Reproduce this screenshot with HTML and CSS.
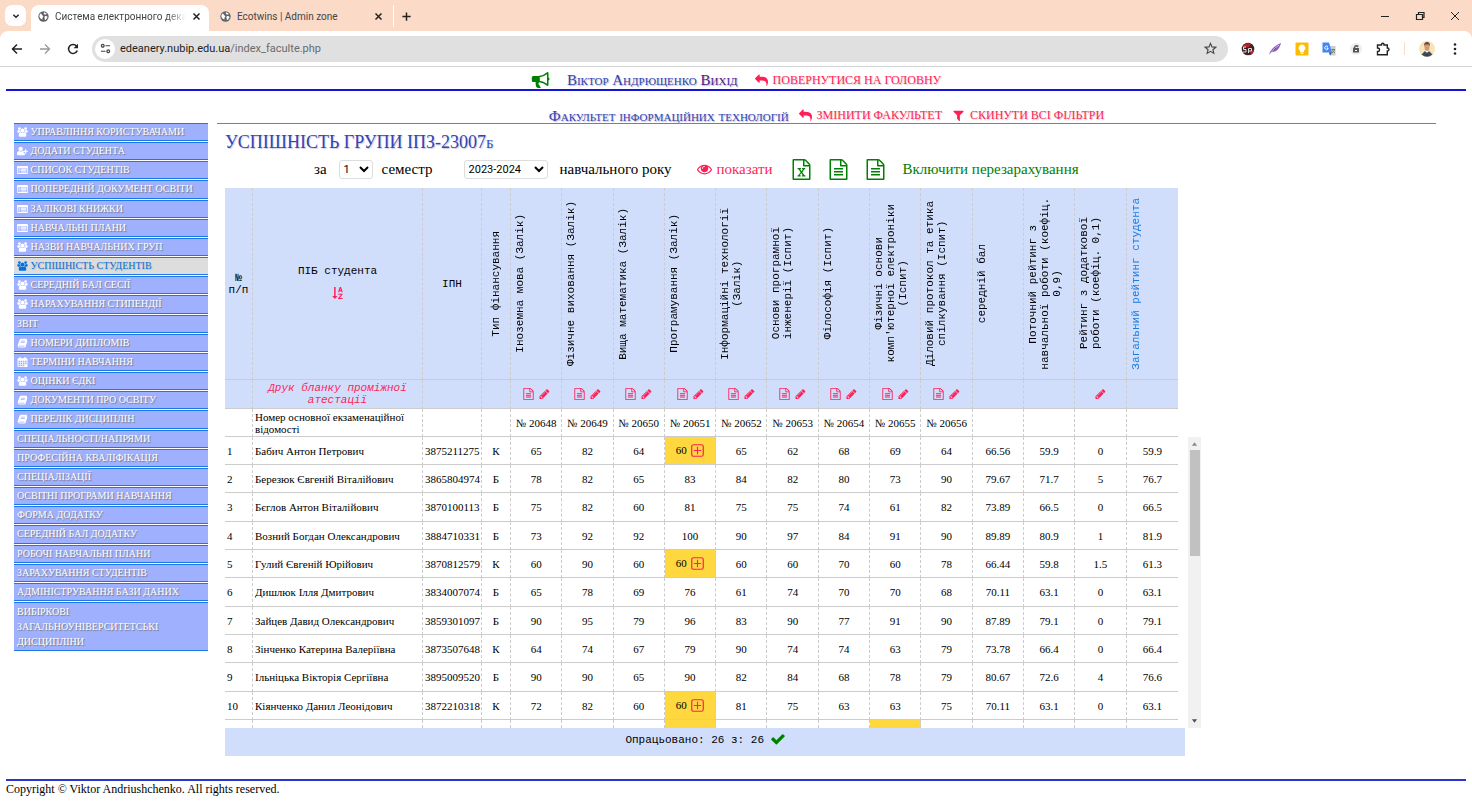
FILE: index.html
```html
<!DOCTYPE html>
<html lang="uk">
<head>
<meta charset="utf-8">
<title>Система електронного деканату</title>
<link rel="stylesheet" href="styles.css">
</head>
<body>
<svg class="sprite" aria-hidden="true">
<symbol id="users" viewBox="0 0 2048 1792"><path d="M657 896q-162 5-265 128h-134q-82 0-138-40.500t-56-118.500q0-353 124-353 6 0 43.500 21t97.500 42.500 119 21.500q67 0 133-23-5 37-5 66 0 159 93 256zm1071 637q0 120-73 189.500t-194 69.500h-874q-121 0-194-69.500t-73-189.500q0-53 3.500-103.500t14-109 26.500-108.500 43-97.500 62-81 85.500-53.500 111.500-20q10 0 43 21.500t73 48 107 48 135 21.500 135-21.500 107-48 73-48 43-21.500q61 0 111.500 20t85.500 53.500 62 81 43 97.500 26.500 108.500 14 109 3.500 103.500zm-1024-1277q0 106-75 181t-181 75-181-75-75-181 75-181 181-75 181 75 75 181zm704 384q0 159-112.500 271.500t-271.500 112.500-271.500-112.500-112.500-271.500 112.500-271.500 271.500-112.500 271.500 112.500 112.500 271.500zm576 225q0 78-56 118.500t-138 40.500h-134q-103-123-265-128 93-97 93-256 0-29-5-66 66 23 133 23 59 0 119-21.500t97.500-42.500 43.500-21q124 0 124 353zm-128-609q0 106-75 181t-181 75-181-75-75-181 75-181 181-75 181 75 75 181z"/></symbol>
<symbol id="user-plus" viewBox="0 0 18 16"><circle cx="6" cy="4.500" r="3.600"/><path d="M0 13c0-3 1-5 3.400-5 1.700 1.300 3.600 1.300 5.200 0 1 0 1.700.4 2.300 1v2.500H13V14c-.5.700-1.200 1-2 1H2c-1.300 0-2-.8-2-2zM13 5h2v2.500h2.500v2H15V12h-2V9.500h-2.500v-2H13z"/></symbol>
<symbol id="list" viewBox="0 0 18 16"><path fill-rule="evenodd" d="M1.500 1.500h15q1.500 0 1.500 1.500v10q0 1.500-1.500 1.500h-15Q0 14.500 0 13V3q0-1.500 1.500-1.500zM1.200 5v8h15.600V5zM2.500 6h2v1.500h-2zm3.500 0h9.500v1.500H6zM2.500 8.500h2V10h-2zm3.500 0h9.500V10H6zM2.500 11h2v1.200h-2zm3.500 0h9.500v1.200H6z"/></symbol>
<symbol id="book" viewBox="0 0 16 16"><path fill-rule="evenodd" d="M5.500 1H14q1.500 0 1.200 1.500L15 3.500q1 .5.700 1.500l-2.500 8.500Q12.800 15 11.500 15H3Q.5 15 .3 12.500v-1.500L3.500 2.500Q4 1 5.500 1zM6 4.200 5.700 5.400H12l.4-1.200zM5.300 6.800 5 8h6.300l.3-1.200zM2 12.200q-.3 1.400 1 1.400h8l.5-1.400z"/></symbol>
<symbol id="calendar" viewBox="0 0 16 16"><path fill-rule="evenodd" d="M3 0h2v2h6V0h2v2h1.500Q16 2 16 3.500v11q0 1.500-1.500 1.500h-13Q0 16 0 14.500v-11Q0 2 1.500 2H3zM1.500 6v2.200H4V6zM5 6v2.200h2.500V6zM8.500 6v2.200H11V6zM12 6v2.200h2.500V6zM1.500 9.200v2.200H4V9.200zM5 9.200v2.200h2.500V9.200zM8.500 9.200v2.200H11V9.200zM12 9.200v2.200h2.500V9.200zM1.500 12.400v2.200H4v-2.200zM5 12.400v2.200h2.500v-2.200zM8.500 12.400v2.200H11v-2.200z"/></symbol>
<symbol id="horn" viewBox="0 0 18 16"><path fill-rule="evenodd" d="M16 0q1 0 1 1v4.500q1 .3 1 1.500t-1 1.500V13q0 1-1 1-4-3.400-8-3.800-1.200.5-1 1.700.1.900 1 1.600.2 1.200 1.500 1.800-.8.900-2.300.7-1.700 0-2.400-1-1-2.800-.6-5H1.800Q.3 10 .3 8.500v-3Q.3 4 1.800 4H7q5-.4 9-4zm-.5 2.200Q12 4.800 8.300 5.200v3.600q3.700.5 7.200 3z"/></symbol>
<symbol id="reply" viewBox="0 0 1792 1792"><path transform="matrix(-1 0 0 1 1792 0)" d="M1792 640q0 26-19 45l-512 512q-19 19-45 19t-45-19-19-45v-256h-224q-98 0-175.500 6t-154 21.500-133 42.500-105.500 69.500-80 101-48.500 138.500-17.500 181q0 55 5 123 0 6 2.500 23.500t2.500 26.500q0 15-8.500 25t-23.500 10q-16 0-28-17-7-9-13-22t-13.500-30-10.500-24q-127-285-127-451 0-199 53-333 162-403 875-403h224v-256q0-26 19-45t45-19 45 19l512 512q19 19 19 45z"/></symbol>
<symbol id="filter" viewBox="0 0 1792 1792"><path d="M1595 295q17 41-14 70l-493 493v742q0 42-39 59-13 5-25 5-27 0-45-19l-256-256q-19-19-19-45v-486l-493-493q-31-29-14-70 17-39 59-39h1280q42 0 59 39z"/></symbol>
<symbol id="eye" viewBox="0 200 1792 1500"><path d="M1664 960q-152-236-381-353 61 104 61 225 0 185-131.500 316.500t-316.500 131.500-316.500-131.500-131.500-316.500q0-121 61-225-229 117-381 353 133 205 333.500 326.500t434.500 121.500 434.500-121.500 333.500-326.500zm-720-384q0-20-14-34t-34-14q-125 0-214.500 89.500t-89.500 214.500q0 20 14 34t34 14 34-14 14-34q0-86 61-147t147-61q20 0 34-14t14-34zm848 384q0 34-20 69-140 230-376.500 368.500t-499.500 138.500-499.500-139-376.500-368q-20-35-20-69t20-69q140-229 376.500-368t499.500-139 499.500 139 376.500 368q20 35 20 69z"/></symbol>
<symbol id="pencil" viewBox="128 128 1536 1536"><path d="M491 1536l91-91-235-235-91 91v107h128v128h107zm523-928q0-22-22-22-10 0-17 7l-542 542q-7 7-7 17 0 22 22 22 10 0 17-7l542-542q7-7 7-17zm-54-192l416 416-832 832h-416v-416zm683 96q0 53-37 90l-166 166-416-416 166-165q36-38 90-38 53 0 91 38l235 234q37 39 37 91z"/></symbol>
<symbol id="doc" viewBox="128 0 1536 1792"><path d="M1596 380q28 28 48 76t20 88v1152q0 40-28 68t-68 28h-1344q-40 0-68-28t-28-68v-1600q0-40 28-68t68-28h896q40 0 88 20t76 48zm-444-244v376h376q-10-29-22-41l-313-313q-12-12-41-22zm384 1528v-1024h-416q-40 0-68-28t-28-68v-416h-768v1536h1280zm-1024-864q0-14 9-23t23-9h704q14 0 23 9t9 23v64q0 14-9 23t-23 9h-704q-14 0-23-9t-9-23v-64zm736 224q14 0 23 9t9 23v64q0 14-9 23t-23 9h-704q-14 0-23-9t-9-23v-64q0-14 9-23t23-9h704zm0 256q14 0 23 9t9 23v64q0 14-9 23t-23 9h-704q-14 0-23-9t-9-23v-64q0-14 9-23t23-9h704z"/></symbol>
<symbol id="xls" viewBox="128 0 1536 1792"><path d="M1596 380q28 28 48 76t20 88v1152q0 40-28 68t-68 28h-1344q-40 0-68-28t-28-68v-1600q0-40 28-68t68-28h896q40 0 88 20t76 48zm-444-244v376h376q-10-29-22-41l-313-313q-12-12-41-22zm384 1528v-1024h-416q-40 0-68-28t-28-68v-416h-768v1536h1280z"/><path d="M560 760h290v110h-75l122 180 122-180h-75v-110h270v110h-70l-180 250 190 270h70v110h-290v-110h75l-130-190-130 190h75v110H560v-110h70l190-270-180-250h-80z"/></symbol>
<symbol id="sort" viewBox="0 0 14 16"><path d="M2.500 0h2v12H7l-3.500 4L0 12h2.500zM10 0h1.700L14 7h-1.500L12 5.500H9.700L9.200 7H7.700zm.8 2-.7 2.300h1.500zM8 9h5.700v1l-3.800 4.700h3.900V16H7.800v-1l3.800-4.700H8z"/></symbol>
<symbol id="plus" viewBox="0 0 14 14"><rect x=".8" y=".8" width="12.400" height="12.400" rx="2" fill="none" stroke="currentColor" stroke-width="1.300"/><path d="M6.400 3h1.200v3.400H11v1.200H7.600V11H6.400V7.600H3V6.400h3.400z"/></symbol>
<symbol id="check" viewBox="100 230 1600 1320"><path d="M1671 566q0 40-28 68l-724 724-136 136q-28 28-68 28t-68-28l-136-136-362-362q-28-28-28-68t28-68l136-136q28-28 68-28t68 28l294 295 656-657q28-28 68-28t68 28l136 136q28 28 28 68z"/></symbol>
<symbol id="globe" viewBox="0 0 16 16"><circle cx="8" cy="8" r="7.500"/><path fill="#fff" d="M3 4c2-.5 3 .5 2.600 2C7 6 8 7 7.500 8.500 7 9.500 6 10 6.500 12.500 4 12 1.800 10 2 7zM8.500 2.200c2 0 3.500 1 4.500 2.500-1.500-.4-2 .6-3 .3C8.700 4.600 8 3.600 8.500 2.200zM9.500 8c1.300-1 3-.8 4.300.5-.3 2.500-2 4.300-4 5 .8-1.500-.8-3.600-.3-5.500z"/></symbol>
<symbol id="close" viewBox="0 0 12 12"><path fill="none" stroke="currentColor" stroke-width="2" d="M2 2l8 8M10 2l-8 8"/></symbol>
</svg>

<header class="browser">
  <div class="tabs">
    <button class="tab-search" aria-label="Пошук вкладок"><svg viewBox="0 0 12 12"><path fill="none" stroke="currentColor" stroke-width="2" d="M2 4l4 4 4-4"/></svg></button>
    <div class="tab active"><svg class="fav"><use href="#globe"/></svg><span class="tab-title fade">Система електронного декана</span><button aria-label="Закрити"><svg><use href="#close"/></svg></button></div>
    <div class="tab"><svg class="fav"><use href="#globe"/></svg><span class="tab-title">Ecotwins | Admin zone</span><button aria-label="Закрити"><svg><use href="#close"/></svg></button></div>
    <button class="new-tab" aria-label="Нова вкладка"><svg viewBox="0 0 12 12"><path d="M5.200 1.500h1.600v3.700h3.700v1.600H6.800v3.700H5.200V6.800H1.500V5.200h3.700z"/></svg></button>
    <div class="window-buttons">
      <button aria-label="Згорнути"><svg viewBox="0 0 10 10"><path d="M1 5h8v1H1z"/></svg></button>
      <button aria-label="Розгорнути"><svg viewBox="0 0 10 10"><path fill="none" stroke="currentColor" stroke-width="1.200" d="M1.500 3.500h6v5h-6zM3.500 3V1.500h5.500v5H8"/></svg></button>
      <button aria-label="Закрити вікно"><svg viewBox="0 0 10 10"><path fill="none" stroke="currentColor" d="M1 1l8 8M9 1L1 9"/></svg></button>
    </div>
  </div>
  <div class="toolbar">
    <button aria-label="Назад"><svg viewBox="0 0 12 12"><path fill="none" stroke="currentColor" stroke-width="1.500" d="M11 6H2M6 1.500L1.500 6 6 10.500"/></svg></button>
    <button class="dim" aria-label="Вперед"><svg viewBox="0 0 12 12"><path fill="none" stroke="currentColor" stroke-width="1.300" d="M1 6h9M6 1.500L10.500 6 6 10.500"/></svg></button>
    <button aria-label="Оновити"><svg viewBox="0 0 12 12"><path fill="none" stroke="currentColor" stroke-width="1.500" d="M10.300 7.500A4.500 4.500 0 1 1 9.500 3"/><path d="M11 .8v4.400H6.600z"/></svg></button>
    <div class="address">
      <span class="site"><svg viewBox="0 0 12 12"><g fill="none" stroke="currentColor" stroke-width="1.300"><circle cx="3" cy="3" r="1.500"/><path d="M6 3h5M1 9h5"/><circle cx="9" cy="9" r="1.500"/></g></svg></span>
      <span class="url">edeanery.nubip.edu.ua<span>/index_faculte.php</span></span>
      <button aria-label="Закладка"><svg viewBox="0 0 14 14"><path fill="none" stroke="currentColor" stroke-width="1.200" d="M7 1.500l1.600 3.800 4.100.3-3.100 2.700 1 4L7 10.100l-3.600 2.200 1-4L1.300 5.600l4.100-.3z"/></svg></button>
    </div>
    <div class="extensions">
      <svg viewBox="0 0 14 14"><circle cx="7" cy="7" r="6.300" fill="#3a2426"/><path fill="#b8232b" d="M2 3.500Q6 0 10 2L8 5 3 6zM9 9l4-1q0 3-3 5z"/><path fill="none" stroke="#ddd" d="M5 5H2.500v2.500H5V10H2M7.500 11V6.500h3V9H8"/></svg>
      <svg viewBox="0 0 14 14"><path fill="#8e5bc0" d="M1 13Q3 5 13 1q-1 5-5 8-3 1-5 1.500z"/><path stroke="#fff" stroke-width=".7" d="M3 11q3-5 8-8"/></svg>
      <svg viewBox="0 0 14 14"><rect x=".5" y=".5" width="13" height="13" rx="1" fill="#fbbc04"/><path fill="#fff" d="M7 2.500a3.500 3.500 0 0 1 2 6.300V10H5V8.800a3.500 3.500 0 0 1 2-6.300zM5.500 10.500h3v1.200h-3z"/></svg>
      <svg viewBox="0 0 14 14"><path fill="#ccc" d="M6 4h7.500v9.500H8z"/><path fill="#4285f4" d="M.5.500H7l3 10H.5z"/><path fill="#174ea6" d="M7 10.500h3L8 13.500z"/><path fill="none" stroke="#fff" d="M6 4.500Q4.500 3.500 3.300 4.500t0 2.500T6 7V6H4.500"/><path stroke="#777" d="M9.500 7.500H13M10 11l2.500-3M10.500 8.500L13 11"/></svg>
      <svg viewBox="0 0 14 14"><circle cx="7" cy="7" r="6" fill="#eee"/><path fill="#555" d="M5 5q0-1.500 2-2l2.500.5L9 5.500 7 4.500 6 6h4v4.500H4V6.500z"/><path fill="#fff" d="M6 8h2v1H6z"/></svg>
      <svg viewBox="0 0 14 14"><path fill="none" stroke="currentColor" stroke-width="1.400" d="M1.500 3H5.500Q5.500 1.300 6.800 1.300T8 3H11.300v3q1.700 0 1.700 1.400T11.300 9v3.700H1.500V9.500q2 0 2-1.800t-2-1.700z"/></svg>
      <i></i>
      <svg class="avatar" viewBox="0 0 16 16"><circle cx="8" cy="8" r="8" fill="#f5e5b7"/><path fill="#3f4a5e" d="M2.500 13.500L6 10l2 2 2-2 3.500 3.500Q8 18 2.500 13.500z"/><path fill="#fff" d="M6.500 10h3L8 13z"/><ellipse cx="8" cy="6" rx="2.500" ry="4" fill="#d49a78"/><path fill="#6b4630" d="M5.200 5.500Q4.500 1 8 1t2.800 4.500L10 3.500H6z"/><path stroke="#26324a" d="M8 11v4"/></svg>
      <svg viewBox="0 0 14 14"><circle cx="7" cy="2.500" r="1.300"/><circle cx="7" cy="7" r="1.300"/><circle cx="7" cy="11.500" r="1.300"/></svg>
    </div>
  </div>
</header>

<div class="page">
  <div class="user-bar">
    <svg class="horn"><use href="#horn"/></svg>
    <span class="who">Віктор Андрющенко <a class="exit" href="#">Вихід</a></span>
    <a class="action" href="#"><svg><use href="#reply"/></svg>ПОВЕРНУТИСЯ НА ГОЛОВНУ</a>
  </div>
  <div class="columns">
    <nav class="menu">
      <a href="#"><svg><use href="#users"/></svg> УПРАВЛІННЯ КОРИСТУВАЧАМИ</a>
      <a href="#"><svg><use href="#user-plus"/></svg> ДОДАТИ СТУДЕНТА</a>
      <a href="#"><svg><use href="#list"/></svg> СПИСОК СТУДЕНТІВ</a>
      <a href="#"><svg><use href="#list"/></svg> ПОПЕРЕДНІЙ ДОКУМЕНТ ОСВІТИ</a>
      <a href="#"><svg><use href="#list"/></svg> ЗАЛІКОВІ КНИЖКИ</a>
      <a href="#"><svg><use href="#list"/></svg> НАВЧАЛЬНІ ПЛАНИ</a>
      <a href="#"><svg><use href="#users"/></svg> НАЗВИ НАВЧАЛЬНИХ ГРУП</a>
      <a href="#" class="current"><svg><use href="#users"/></svg> УСПІШНІСТЬ СТУДЕНТІВ</a>
      <a href="#"><svg><use href="#users"/></svg> СЕРЕДНІЙ БАЛ СЕСІЇ</a>
      <a href="#"><svg><use href="#users"/></svg> НАРАХУВАННЯ СТИПЕНДІЇ</a>
      <a href="#">ЗВІТ</a>
      <a href="#"><svg><use href="#book"/></svg> НОМЕРИ ДИПЛОМІВ</a>
      <a href="#"><svg><use href="#calendar"/></svg> ТЕРМІНИ НАВЧАННЯ</a>
      <a href="#"><svg><use href="#users"/></svg> ОЦІНКИ ЄДКІ</a>
      <a href="#"><svg><use href="#book"/></svg> ДОКУМЕНТИ ПРО ОСВІТУ</a>
      <a href="#"><svg><use href="#book"/></svg> ПЕРЕЛІК ДИСЦИПЛІН</a>
      <a href="#">СПЕЦІАЛЬНОСТІ/НАПРЯМИ</a>
      <a href="#">ПРОФЕСІЙНА КВАЛІФІКАЦІЯ</a>
      <a href="#">СПЕЦІАЛІЗАЦІЇ</a>
      <a href="#">ОСВІТНІ ПРОГРАМИ НАВЧАННЯ</a>
      <a href="#">ФОРМА ДОДАТКУ</a>
      <a href="#">СЕРЕДНІЙ БАЛ ДОДАТКУ</a>
      <a href="#">РОБОЧІ НАВЧАЛЬНІ ПЛАНИ</a>
      <a href="#">ЗАРАХУВАННЯ СТУДЕНТІВ</a>
      <a href="#">АДМІНІСТРУВАННЯ БАЗИ ДАНИХ</a>
      <a href="#">ВИБІРКОВІ ЗАГАЛЬНОУНІВЕРСИТЕТСЬКІ ДИСЦИПЛІНИ</a>
    </nav>
    <main>
      <div class="faculty">
        <span class="who">Факультет інформаційних технологій</span>
        <a class="action" href="#"><svg><use href="#reply"/></svg>ЗМІНИТИ ФАКУЛЬТЕТ</a>
        <a class="action" href="#"><svg><use href="#filter"/></svg>СКИНУТИ ВСІ ФІЛЬТРИ</a>
      </div>
      <div class="report">
        <h1>УСПІШНІСТЬ ГРУПИ ІПЗ-23007б</h1>
        <form class="controls">
          <label for="semester">за</label>
          <select id="semester"><option>1</option><option>2</option></select>
          <span>семестр</span>
          <select id="year" class="year"><option>2023-2024</option></select>
          <label for="year">навчального року</label>
          <a class="show" href="#"><svg><use href="#eye"/></svg>показати</a>
          <span class="exports"><a href="#" aria-label="Excel"><svg><use href="#xls"/></svg></a><a href="#" aria-label="Відомість"><svg><use href="#doc"/></svg></a><a href="#" aria-label="Звіт"><svg><use href="#doc"/></svg></a></span>
          <a class="recount" href="#">Включити перезарахування</a>
        </form>
        <div class="grid">
          <div class="table-box">
          <table>
            <colgroup><col class="c-num"><col class="c-name"><col class="c-ipn"><col class="c-fin"><col span="13"></colgroup>
            <thead>
              <tr class="heads">
                <th>№<br>п/п</th>
                <th>ПІБ студента<a class="sort" href="#" aria-label="Сортувати"><svg><use href="#sort"/></svg></a></th>
                <th>ІПН</th>
                <th><span>Тип фінансування</span></th>
                <th class="v"><span>Іноземна мова (Залік)</span></th>
                <th class="v"><span>Фізичне виховання (Залік)</span></th>
                <th class="v"><span>Вища математика (Залік)</span></th>
                <th class="v"><span>Програмування (Залік)</span></th>
                <th class="v"><span>Інформаційні технології<br>(Залік)</span></th>
                <th class="v"><span>Основи програмної<br>інженерії (Іспит)</span></th>
                <th class="v"><span>Філософія (Іспит)</span></th>
                <th class="v"><span>Фізичні основи<br>комп'ютерної електроніки<br>(Іспит)</span></th>
                <th class="v"><span>Діловий протокол та етика<br>спілкування (Іспит)</span></th>
                <th class="v"><span>середній бал</span></th>
                <th class="v"><span>Поточний рейтинг з<br>навчальної роботи (коефіц.<br>0,9)</span></th>
                <th class="v"><span>Рейтинг з додаткової<br>роботи (коефіц. 0,1)</span></th>
                <th class="v total"><span>Загальний рейтинг студента</span></th>
              </tr>
              <tr class="tools">
                <th></th><th><a href="#" class="print">Друк бланку проміжної атестації</a></th><th></th><th></th>
                <th><svg class="d"><use href="#doc"/></svg><svg><use href="#pencil"/></svg></th>
                <th><svg class="d"><use href="#doc"/></svg><svg><use href="#pencil"/></svg></th>
                <th><svg class="d"><use href="#doc"/></svg><svg><use href="#pencil"/></svg></th>
                <th><svg class="d"><use href="#doc"/></svg><svg><use href="#pencil"/></svg></th>
                <th><svg class="d"><use href="#doc"/></svg><svg><use href="#pencil"/></svg></th>
                <th><svg class="d"><use href="#doc"/></svg><svg><use href="#pencil"/></svg></th>
                <th><svg class="d"><use href="#doc"/></svg><svg><use href="#pencil"/></svg></th>
                <th><svg class="d"><use href="#doc"/></svg><svg><use href="#pencil"/></svg></th>
                <th><svg class="d"><use href="#doc"/></svg><svg><use href="#pencil"/></svg></th>
                <th></th><th></th><th><svg><use href="#pencil"/></svg></th><th></th>
              </tr>
              <tr class="sheets"><td></td><td>Номер основної екзаменаційної відомості</td><td></td><td></td><td>№ 20648</td><td>№ 20649</td><td>№ 20650</td><td>№ 20651</td><td>№ 20652</td><td>№ 20653</td><td>№ 20654</td><td>№ 20655</td><td>№ 20656</td><td></td><td></td><td></td><td></td></tr>
            </thead>
            <tbody>
              <tr><td>1</td><td>Бабич Антон Петрович</td><td>3875211275</td><td>К</td><td>65</td><td>82</td><td>64</td><td class="low">60 <svg><use href="#plus"/></svg></td><td>65</td><td>62</td><td>68</td><td>69</td><td>64</td><td>66.56</td><td>59.9</td><td>0</td><td>59.9</td></tr>
              <tr><td>2</td><td>Березюк Євгеній Віталійович</td><td>3865804974</td><td>Б</td><td>78</td><td>82</td><td>65</td><td>83</td><td>84</td><td>82</td><td>80</td><td>73</td><td>90</td><td>79.67</td><td>71.7</td><td>5</td><td>76.7</td></tr>
              <tr><td>3</td><td>Бєглов Антон Віталійович</td><td>3870100113</td><td>Б</td><td>75</td><td>82</td><td>60</td><td>81</td><td>75</td><td>75</td><td>74</td><td>61</td><td>82</td><td>73.89</td><td>66.5</td><td>0</td><td>66.5</td></tr>
              <tr><td>4</td><td>Возний Богдан Олександрович</td><td>3884710331</td><td>Б</td><td>73</td><td>92</td><td>92</td><td>100</td><td>90</td><td>97</td><td>84</td><td>91</td><td>90</td><td>89.89</td><td>80.9</td><td>1</td><td>81.9</td></tr>
              <tr><td>5</td><td>Гулий Євгеній Юрійович</td><td>3870812579</td><td>К</td><td>60</td><td>90</td><td>60</td><td class="low">60 <svg><use href="#plus"/></svg></td><td>60</td><td>60</td><td>70</td><td>60</td><td>78</td><td>66.44</td><td>59.8</td><td>1.5</td><td>61.3</td></tr>
              <tr><td>6</td><td>Дишлюк Ілля Дмитрович</td><td>3834007074</td><td>Б</td><td>65</td><td>78</td><td>69</td><td>76</td><td>61</td><td>74</td><td>70</td><td>70</td><td>68</td><td>70.11</td><td>63.1</td><td>0</td><td>63.1</td></tr>
              <tr><td>7</td><td>Зайцев Давид Олександрович</td><td>3859301097</td><td>Б</td><td>90</td><td>95</td><td>79</td><td>96</td><td>83</td><td>90</td><td>77</td><td>91</td><td>90</td><td>87.89</td><td>79.1</td><td>0</td><td>79.1</td></tr>
              <tr><td>8</td><td>Зінченко Катерина Валеріївна</td><td>3873507648</td><td>К</td><td>64</td><td>74</td><td>67</td><td>79</td><td>90</td><td>74</td><td>74</td><td>63</td><td>79</td><td>73.78</td><td>66.4</td><td>0</td><td>66.4</td></tr>
              <tr><td>9</td><td>Ільніцька Вікторія Сергіївна</td><td>3895009520</td><td>Б</td><td>90</td><td>90</td><td>65</td><td>90</td><td>82</td><td>84</td><td>68</td><td>78</td><td>79</td><td>80.67</td><td>72.6</td><td>4</td><td>76.6</td></tr>
              <tr><td>10</td><td>Кіянченко Данил Леонідович</td><td>3872210318</td><td>К</td><td>72</td><td>82</td><td>60</td><td class="low">60 <svg><use href="#plus"/></svg></td><td>81</td><td>75</td><td>63</td><td>63</td><td>75</td><td>70.11</td><td>63.1</td><td>0</td><td>63.1</td></tr>
              <tr><td></td><td></td><td></td><td></td><td></td><td></td><td></td><td class="low"></td><td></td><td></td><td></td><td class="low"></td><td></td><td></td><td></td><td></td><td></td></tr>
            </tbody>
          </table>
          </div>
          <div class="scroll"><svg viewBox="0 0 8 4"><path fill="#8a8a8a" d="M1 4l3-4 3 4z"/></svg><div class="thumb"></div><svg viewBox="0 0 8 4"><path fill="#505050" d="M1 0l3 4 3-4z"/></svg></div>
        </div>
        <div class="done">Опрацьовано: 26 з: 26 <svg><use href="#check"/></svg></div>
      </div>
    </main>
  </div>
  <footer>Copyright © Viktor Andriushchenko. All rights reserved.</footer>
</div>
</body>
</html>
```
FILE: styles.css
```css
* { box-sizing: border-box; }
body { margin: 0; background: #fff; color: #000; font-family: "Liberation Serif", "Times New Roman", serif; font-size: 12px; }
a { text-decoration: none; color: inherit; }
svg { fill: currentColor; flex: none; }
button { border: 0; padding: 0; background: none; color: inherit; font: inherit; display: flex; align-items: center; justify-content: center; }
.sprite { display: none; }

/* browser window */
.browser { font-family: Roboto, "Noto Sans", sans-serif; font-size: 10px; color: #222; background: #fcdac8; border-bottom: 1px solid #d3d3d3; }
.tabs { display: flex; height: 31px; padding: 5px 12px 0 5px; }
.tab-search { width: 21px; height: 21px; border-radius: 7px; background: #fff; margin-right: 5px; }
.tab-search svg { width: 8px; height: 8px; }
.tab { display: flex; align-items: center; width: 178px; height: 26px; padding: 0 8px 4px 7px; margin-right: 4px; gap: 6px; }
.tab.active { background: #fff; border-radius: 8px 8px 0 0; }
.fav { width: 11px; height: 11px; color: #5f6368; }
.tab-title { flex: 1; min-width: 0; overflow: hidden; white-space: nowrap; color: #444; }
.fade { -webkit-mask-image: linear-gradient(90deg, #000 85%, transparent); mask-image: linear-gradient(90deg, #000 85%, transparent); }
.tab button svg { width: 9px; height: 9px; }
.new-tab { width: 26px; height: 22px; border-left: 1px solid #fff; margin-left: -2px; }
.new-tab svg { width: 11px; height: 11px; }
.window-buttons { display: flex; gap: 25px; margin-left: auto; height: 21px; }
.window-buttons svg { width: 10px; height: 10px; }
.toolbar { display: flex; align-items: center; height: 35px; padding: 0 10px; background: #fff; border-radius: 8px 8px 0 0; }
.toolbar > button { width: 14px; margin-right: 14px; }
.toolbar > button svg { width: 12px; height: 12px; }
.toolbar > .dim { color: #999; }
.address { flex: 1; display: flex; align-items: center; height: 26px; border-radius: 13px; background: #e0e0e0; padding: 0 11px 0 3px; gap: 5px; margin-left: -2px; color: #444; }
.site { display: flex; width: 20px; height: 20px; border-radius: 10px; background: #fff; align-items: center; justify-content: center; }
.site svg { width: 11px; height: 11px; }
.url { flex: 1; color: #222; font-size: 11px; }
.url span { color: #6a6a6a; }
.address button svg { width: 13px; height: 13px; }
.extensions { display: flex; align-items: center; gap: 13px; padding-left: 13px; }
.extensions svg { width: 14px; height: 14px; }
.extensions i { width: 1px; height: 13px; margin: 0 1px; background: #fcdac8; }
.extensions .avatar { width: 16px; height: 16px; }

/* page frame */
.page { padding: 0 6px; }
.user-bar { display: flex; justify-content: center; align-items: center; height: 24px; padding-top: 4px; gap: 17px; border-bottom: 2px solid #1414dc; }
.horn { width: 19px; height: 16px; color: green; }
.who { font-size: 15px; line-height: 18px; font-variant: small-caps; color: #3344b4; text-shadow: 1px 1px 1px #bbc; }
.exit { color: #551a8b; }
.action { display: flex; align-items: center; gap: 5px; font-size: 12px; color: #ff1f56; text-shadow: 1px 1px 1px #dcc; }
.action svg { width: 13px; height: 13px; }
.columns { display: flex; padding: 14px 30px 0 8px; gap: 9px; }

.menu { display: grid; grid-template-rows: repeat(25, 1fr) auto; row-gap: 1px; width: 194px; flex: none; min-height: 528px; margin: 18px 0 0; align-self: flex-start; }
.menu a { padding: 0 3px; background: #9fb0ff; border: solid #1c78e6; border-width: 1px 0; color: #fff; font-size: 10px; line-height: 16px; text-shadow: 1px 1px 1px #777; }
.menu a:last-child { line-height: 15px; padding: 1px 3px; }
.menu svg { width: 11px; height: 10px; vertical-align: -2px; }
.menu .current { background: #ddd; color: #0a6fd6; text-shadow: 1px 1px 1px #bbb; }

main { flex: 1; min-width: 0; }
.faculty { display: flex; justify-content: center; align-items: center; gap: 10px; height: 19px; padding-top: 3px; border-bottom: 1px solid #6b74f0; }
.report { padding: 0 0 0 8px; }
h1 { margin: 0; font-size: 18px; line-height: 36px; font-weight: normal; font-variant: small-caps; color: #3344b4; text-shadow: 1px 1px 1px #ccd; }

.controls { display: flex; align-items: center; height: 28px; padding: 0 0 9px 89px; font-size: 15px; white-space: nowrap; }
.controls select { height: 19px; width: 34px; margin: 0 9px 0 12px; padding: 0; border: 1px solid #ddd; border-radius: 3px; background: #fff; font-family: Roboto, sans-serif; font-size: 11px; color: #000; }
.controls .year { width: 84px; margin: 0 12px 0 31px; }
.show { display: flex; align-items: center; gap: 5px; margin-left: 25px; color: #ff1f56; }
.show svg { width: 15px; height: 13px; }
.exports { display: flex; gap: 18px; margin: 0 18px 0 19px; color: green; }
.exports svg { display: block; width: 19px; height: 21px; }
.recount { color: green; }

.grid { display: flex; align-items: flex-end; }
.table-box { width: 953px; max-height: 540px; overflow: hidden; }
table { width: 100%; table-layout: fixed; border-collapse: separate; border-spacing: 0; font-size: 11px; line-height: 12px; }
.c-num { width: 28px; }
.c-name { width: 170px; }
.c-ipn { width: 59px; }
.c-fin { width: 29px; }
th, td { padding: 0 2px; text-align: center; vertical-align: middle; font-weight: normal; border-right: 1px dashed #ccc; border-bottom: 1px solid #ccc; white-space: nowrap; }
th:last-child, td:last-child { border-right: 0; }
td:nth-child(1), td:nth-child(2) { text-align: left; }
td:nth-child(2) { white-space: normal; }
th { background: #d0defc; font-family: "Liberation Mono", "Courier New", monospace; font-size: 11px; line-height: 12px; }
.heads { height: 192px; }
.heads span { display: inline-block; writing-mode: vertical-rl; transform: rotate(180deg); vertical-align: middle; text-align: center; }
.heads .v { text-align: left; padding-left: 3px; }
.total { color: #1a7ce0; }
.sort { display: block; margin: 10px 0 0; color: #ff1f56; }
.sort svg { width: 11px; height: 12px; }
.tools { height: 29px; color: #ff1f56; }
.tools svg { width: 11px; height: 10px; vertical-align: middle; }
.tools .d { width: 11px; height: 12px; margin-right: 5px; }
.print { display: block; font-style: italic; white-space: normal; }
.sheets, tbody tr { height: 28px; }
tbody tr:nth-child(3n) { height: 29px; }
.low { background: #ffd83f; }
.low svg { width: 13px; height: 13px; margin-left: 2px; vertical-align: middle; color: #ff1f56; }

.scroll { display: flex; flex-direction: column; align-items: center; width: 13px; height: 291px; padding: 5px 0; margin-left: 10px; background: #f1f1f1; }
.scroll svg { width: 7px; height: 4px; }
.thumb { width: 10px; height: 106px; margin: 4px 0 auto; background: #c1c1c1; }
.done { max-width: 960px; height: 28px; padding-top: 5px; text-align: center; background: #d0defc; font-family: "Liberation Mono", "Courier New", monospace; font-size: 11px; }
.done svg { width: 14px; height: 12px; vertical-align: -2px; color: green; }

footer { margin-top: 23px; border-top: 2px solid #2a35d0; line-height: 15px; padding-top: 1px; }
```
